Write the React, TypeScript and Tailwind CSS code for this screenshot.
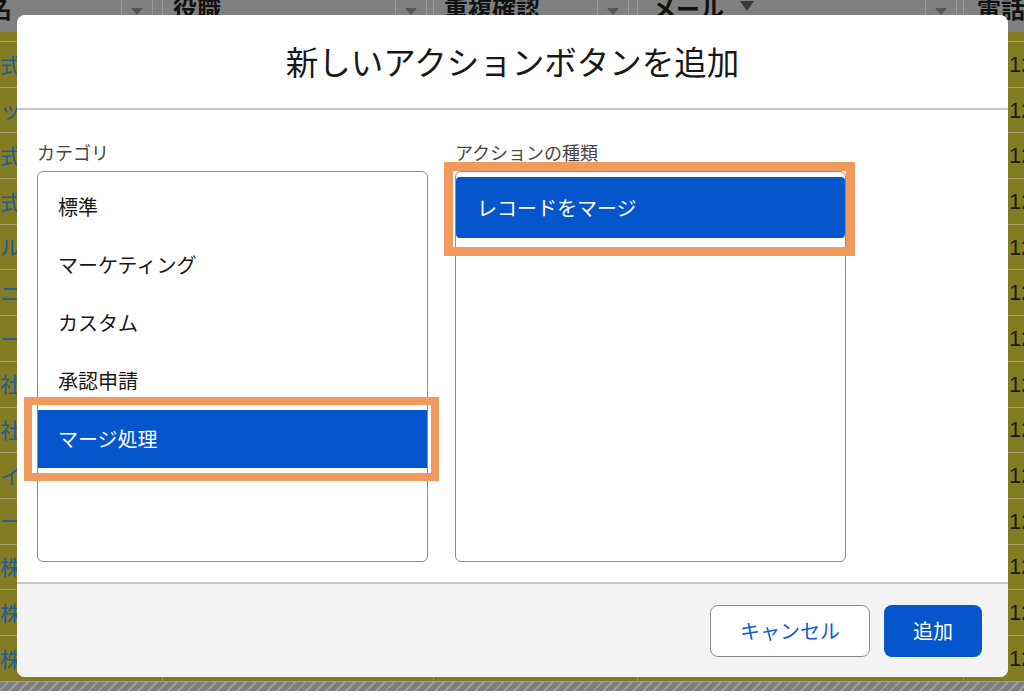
import React from 'react';

const jp = "font-['Noto_Sans_CJK_JP','Noto_Sans',sans-serif]";

const leftTexts = ['式', 'ッ', '式', '式', 'ル', 'ニ', 'ー', '社', '社', 'イ', 'ー', '株', '株', '株'];
const categories = ['標準', 'マーケティング', 'カスタム', '承認申請', 'マージ処理'];

function Caret() {
  return <span className="block h-0 w-0 border-x-[6px] border-t-[7px] border-x-transparent border-t-[#555]" />;
}

function HeaderCell({ label, width, textOffset = 10, filter = false }: { label: string; width: string; textOffset?: number; filter?: boolean }) {
  return (
    <div className={`flex h-full shrink-0 border-x border-[#9a9a9a] ${width}`}>
      <div className="relative flex-1 overflow-hidden">
        <span
          className="absolute top-[-6px] whitespace-nowrap text-[24px] leading-[28px] font-bold text-[#111]"
          style={{ left: textOffset }}
        >
          {label}
        </span>
        {filter && (
          <span className="absolute left-[102px] top-[1px] block h-0 w-0 border-x-[7px] border-t-[10px] border-x-transparent border-t-[#3a3a3a]" />
        )}
      </div>
      <div className="flex w-[31px] shrink-0 justify-center border-l border-[#9a9a9a] pt-[8px]">
        <Caret />
      </div>
    </div>
  );
}

function Sheet() {
  return (
    <div className="flex h-full flex-col">
      <div className="flex h-[32px] shrink-0 bg-[#808080]">
        <HeaderCell label="氏名" width="w-[153px] border-l-0" textOffset={-36} />
        <div className="w-[9px] shrink-0" />
        <HeaderCell label="役職" width="w-[265px]" />
        <div className="w-[6px] shrink-0" />
        <HeaderCell label="重複確認" width="w-[196px]" />
        <div className="w-[8px] shrink-0" />
        <HeaderCell label="メール" width="w-[320px]" textOffset={14} filter />
        <div className="w-[6px] shrink-0" />
        <div className="relative flex-1 overflow-hidden border-l border-[#9a9a9a]">
          <span className="absolute left-[13px] top-[-6px] whitespace-nowrap text-[24px] leading-[28px] font-bold text-[#111]">電話</span>
        </div>
      </div>
      <div className="h-[10px] shrink-0 border-b border-[#a7a36c] bg-[#837c22]" />
      {leftTexts.map((t, i) => (
        <div key={i} className="flex h-[45.7px] shrink-0 items-center border-b border-[#a7a36c] bg-[#837c22]">
          <div className="w-[162px] shrink-0 overflow-hidden whitespace-nowrap text-[21px] text-[#1f5c98]">{t}</div>
          <div className="h-full w-[271px] shrink-0 border-l border-[#9a9561]" />
          <div className="h-full w-[204px] shrink-0 border-l border-[#9a9561]" />
          <div className="h-full w-[326px] shrink-0 border-l border-[#9a9561]" />
          <div className="flex h-full flex-1 items-center overflow-hidden whitespace-nowrap border-l border-[#9a9561] pl-[45px] font-['Liberation_Sans',sans-serif] text-[22px] text-[#1b1b1b]">
            12
          </div>
        </div>
      ))}
      <div className="h-[9px] shrink-0 bg-[image:repeating-linear-gradient(135deg,#7f7f7f_0px,#7f7f7f_5px,#9a9a9a_5px,#9a9a9a_7px)]" />
      <div className="flex-1 bg-white" />
    </div>
  );
}

function Highlight({ className }: { className: string }) {
  return <div className={`pointer-events-none absolute border-[#f09a5d] ${className}`} />;
}

export default function App() {
  return (
    <div className={`relative h-[697px] w-[1024px] overflow-hidden bg-white ${jp}`}>
      <Sheet />
      <div className="absolute inset-0 pl-[17px] pt-[15px]">
        <div className="flex h-[662px] w-[991px] flex-col overflow-hidden rounded-[8px] bg-white">
          <div className="flex h-[95px] shrink-0 items-center justify-center border-b-2 border-[#c9c9c9] text-[32.5px] text-[#181818]">
            新しいアクションボタンを追加
          </div>

          <div className="flex h-[472px] shrink-0 gap-[27px] px-[20px] pt-[30px]">
            <div className="flex flex-col">
              <div className="mb-[7px] text-[18px] leading-[24px] text-[#444]">カテゴリ</div>
              <div className="h-[391px] w-[391px] rounded-[6px] border border-[#8c8c8c] pt-[6px]">
                {categories.map((c, i) => {
                  const selected = i === categories.length - 1;
                  return (
                    <div
                      key={c}
                      className={`relative flex h-[58px] items-center pl-[20px] text-[20px] ${selected ? 'bg-[#0556cc] text-white' : 'text-[#181818]'}`}
                    >
                      {c}
                      {selected && <Highlight className="-left-[14px] -right-[12px] -top-[13px] -bottom-[13px] border-[8px]" />}
                    </div>
                  );
                })}
              </div>
            </div>

            <div className="flex flex-col">
              <div className="mb-[7px] text-[18px] leading-[24px] text-[#444]">アクションの種類</div>
              <div className="h-[391px] w-[391px] rounded-[6px] border border-[#8c8c8c] pt-[5px]">
                <div className="relative flex h-[61px] items-center rounded-[4px] bg-[#0556cc] pl-[21px] text-[20px] text-white">
                  レコードをマージ
                  <Highlight className="-left-[12px] -right-[10px] -top-[15px] -bottom-[18px] border-[9px]" />
                </div>
              </div>
            </div>
          </div>

          <div className="flex flex-1 items-center justify-end gap-[14px] border-t-2 border-[#c9c9c9] bg-[#f3f3f3] pr-[26px]">
            <button className="h-[52px] w-[160px] rounded-[8px] border border-[#8c8c8c] bg-white text-[20px] text-[#0b5cd5]">
              キャンセル
            </button>
            <button className="h-[52px] w-[98px] rounded-[8px] bg-[#0556cc] text-[20px] text-white">
              追加
            </button>
          </div>
        </div>
      </div>
    </div>
  );
}
